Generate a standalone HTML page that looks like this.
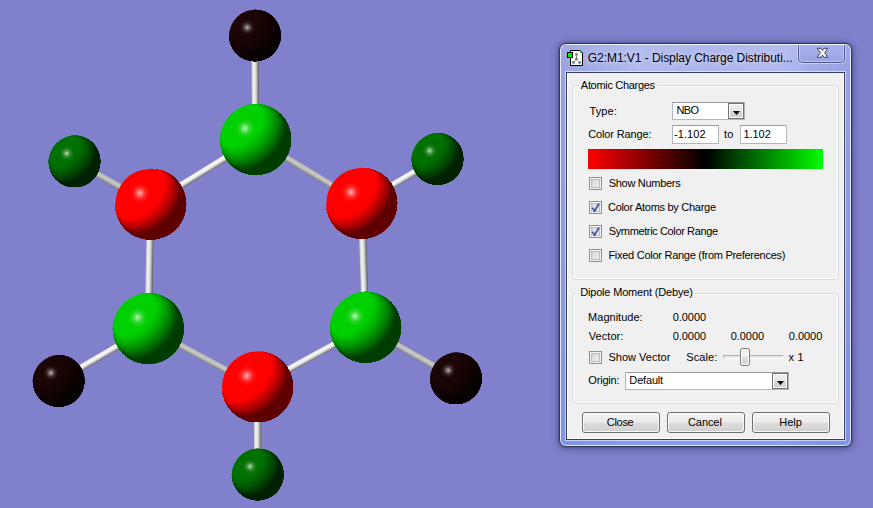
<!DOCTYPE html><html><head><meta charset="utf-8"><title>Display Charge Distribution</title><style>
html,body{margin:0;padding:0}
body{width:873px;height:508px;overflow:hidden;background:#8080cc;position:relative;font-family:"Liberation Sans",sans-serif;font-size:11px;color:#000}
.a{position:absolute;white-space:nowrap}
.t{position:absolute;white-space:nowrap;line-height:13px}
#dlg{position:absolute;left:559px;top:43px;width:293px;height:404px;border-radius:7px;box-sizing:border-box;border:1px solid #2e3558;
 background:linear-gradient(180deg,rgba(255,255,255,.10) 0px,rgba(255,255,255,.04) 28px,rgba(255,255,255,0) 60px,rgba(105,138,232,.55) 100%),linear-gradient(90deg,#959fe0 0%,#9da7e4 8%,#adb6ec 26%,#a9b2ea 50%,#aeb7ee 78%,#9ca6e4 88%,#949ee0 100%);
 box-shadow:inset 0 0 0 1px rgba(255,255,255,.78),0 0 2px 0 rgba(30,30,70,.55),0 1px 7px 1px rgba(30,30,80,.46)}
#client{position:absolute;left:567px;top:73px;width:277px;height:366px;background:#f0f0f0;box-shadow:inset 1px 0 0 #fff,inset -1px 0 0 #fff,inset 0 -1px 0 #fff,0 0 0 1px #39405f,0 0 0 2px rgba(255,255,255,.55)}
.gb{position:absolute;border:1px solid #d3dde4;border-radius:3.500px;box-shadow:inset 0 0 0 1px #fdfdfd;box-sizing:border-box}
.gbl{position:absolute;background:#f0f0f0;height:13px}
.in{position:absolute;box-sizing:border-box;border:1px solid #b4b6bd;border-top-color:#9a9ca3;background:#fff}
.cb{position:absolute;width:13px;height:13px;box-sizing:border-box;border:1px solid #8e8f8f;background:linear-gradient(135deg,#c4c8cc 0%,#e2e4e6 50%,#f6f6f6 100%);box-shadow:inset 0 0 0 1px #f4f4f4, inset 0 0 0 2px #b8bcc0}
.btn{position:absolute;height:21px;box-sizing:border-box;border:1px solid #707070;border-radius:3px;background:linear-gradient(#f3f3f3 0%,#ebebeb 48%,#dddddd 52%,#cfcfcf 100%);box-shadow:inset 0 0 0 1px rgba(255,255,255,.85)}
.dd{position:absolute;width:16px;height:16px;box-sizing:border-box;border:1px solid #707070;background:linear-gradient(#eeeeee 0%,#e8e8e8 48%,#d6d6d6 52%,#cccccc 100%);box-shadow:inset 0 0 0 1px #fff}
.dd:after{content:"";position:absolute;left:4px;top:7px;width:7px;height:4px;background:#000;clip-path:polygon(0 0,100% 0,50% 100%)}
</style></head><body><svg width="873" height="508" viewBox="0 0 873 508" style="position:absolute;left:0;top:0">
<defs><clipPath id="cs"><circle r="1"/></clipPath>
<g id="sr" clip-path="url(#cs)"><circle r="1" fill="#ff0000"/><path fill="#fc0000" d="M-0.023 -1A0.533 0.832 45 1 1 -1 -0.023L-1.57 0.55L0.27 2.39L2.39 0.27L0.55 -1.57Z"/><path fill="#f60000" d="M0.014 -1A0.541 0.845 45 1 1 -1 0.014L-1.55 0.57L0.28 2.41L2.41 0.28L0.57 -1.55Z"/><path fill="#f10000" d="M0.049 -0.999A0.549 0.857 45 1 1 -0.999 0.049L-1.54 0.59L0.3 2.42L2.42 0.3L0.59 -1.54Z"/><path fill="#eb0000" d="M0.083 -0.997A0.556 0.868 45 1 1 -0.997 0.083L-1.52 0.6L0.32 2.44L2.44 0.32L0.6 -1.52Z"/><path fill="#e50000" d="M0.116 -0.993A0.564 0.879 45 1 1 -0.993 0.116L-1.5 0.62L0.34 2.46L2.46 0.34L0.62 -1.5Z"/><path fill="#df0000" d="M0.149 -0.989A0.57 0.89 45 1 1 -0.989 0.149L-1.48 0.64L0.36 2.48L2.48 0.36L0.64 -1.48Z"/><path fill="#da0000" d="M0.18 -0.984A0.577 0.9 45 1 1 -0.984 0.18L-1.46 0.66L0.38 2.5L2.5 0.38L0.66 -1.46Z"/><path fill="#d40000" d="M0.21 -0.978A0.583 0.909 45 1 1 -0.978 0.21L-1.44 0.68L0.39 2.52L2.52 0.39L0.68 -1.44Z"/><path fill="#ce0000" d="M0.24 -0.971A0.588 0.918 45 1 1 -0.971 0.24L-1.43 0.7L0.41 2.53L2.53 0.41L0.7 -1.43Z"/><path fill="#c80000" d="M0.269 -0.963A0.594 0.926 45 1 1 -0.963 0.269L-1.41 0.71L0.43 2.55L2.55 0.43L0.71 -1.41Z"/><path fill="#c30000" d="M0.297 -0.955A0.599 0.934 45 1 1 -0.955 0.297L-1.39 0.73L0.45 2.57L2.57 0.45L0.73 -1.39Z"/><path fill="#bd0000" d="M0.325 -0.946A0.603 0.941 45 1 1 -0.946 0.325L-1.37 0.75L0.47 2.59L2.59 0.47L0.75 -1.37Z"/><path fill="#b70000" d="M0.352 -0.936A0.608 0.948 45 1 1 -0.936 0.352L-1.35 0.77L0.49 2.61L2.61 0.49L0.77 -1.35Z"/><path fill="#b10000" d="M0.378 -0.926A0.612 0.955 45 1 1 -0.926 0.378L-1.33 0.79L0.5 2.63L2.63 0.5L0.79 -1.33Z"/><path fill="#ac0000" d="M0.404 -0.915A0.616 0.961 45 1 1 -0.915 0.404L-1.32 0.8L0.52 2.64L2.64 0.52L0.8 -1.32Z"/><path fill="#a60000" d="M0.429 -0.904A0.619 0.966 45 1 1 -0.904 0.429L-1.3 0.82L0.54 2.66L2.66 0.54L0.82 -1.3Z"/><path fill="#a00000" d="M0.453 -0.891A0.622 0.971 45 1 1 -0.891 0.453L-1.28 0.84L0.56 2.68L2.68 0.56L0.84 -1.28Z"/><path fill="#9a0000" d="M0.477 -0.879A0.625 0.976 45 1 1 -0.879 0.477L-1.26 0.86L0.58 2.7L2.7 0.58L0.86 -1.26Z"/><path fill="#950000" d="M0.5 -0.866A0.628 0.98 45 1 1 -0.866 0.5L-1.24 0.88L0.6 2.72L2.72 0.6L0.88 -1.24Z"/><path fill="#8f0000" d="M0.523 -0.852A0.63 0.984 45 1 1 -0.852 0.523L-1.23 0.9L0.61 2.73L2.73 0.61L0.9 -1.23Z"/><path fill="#890000" d="M0.546 -0.838A0.633 0.987 45 1 1 -0.838 0.546L-1.21 0.91L0.63 2.75L2.75 0.63L0.91 -1.21Z"/><path fill="#830000" d="M0.568 -0.823A0.635 0.99 45 1 1 -0.823 0.568L-1.19 0.93L0.65 2.77L2.77 0.65L0.93 -1.19Z"/><path fill="#7e0000" d="M0.589 -0.808A0.636 0.993 45 1 1 -0.808 0.589L-1.17 0.95L0.67 2.79L2.79 0.67L0.95 -1.17Z"/><path fill="#780000" d="M0.61 -0.793A0.638 0.995 45 1 1 -0.793 0.61L-1.15 0.97L0.69 2.81L2.81 0.69L0.97 -1.15Z"/><path fill="#720000" d="M0.63 -0.776A0.639 0.997 45 1 1 -0.776 0.63L-1.13 0.99L0.7 2.83L2.83 0.7L0.99 -1.13Z"/><path fill="#6c0000" d="M0.65 -0.76A0.64 0.998 45 1 1 -0.76 0.65L-1.12 1.01L0.72 2.84L2.84 0.72L1.01 -1.12Z"/><path fill="#670000" d="M0.67 -0.743A0.64 0.999 45 1 1 -0.743 0.67L-1.1 1.02L0.74 2.86L2.86 0.74L1.02 -1.1Z"/><path fill="#610000" d="M0.689 -0.725A0.641 1 45 1 1 -0.725 0.689L-1.08 1.04L0.76 2.88L2.88 0.76L1.04 -1.08Z"/><path fill="#5e0000" d="M0.707 -0.707A0.641 1 45 1 1 -0.707 0.707L-1.06 1.06L0.78 2.9L2.9 0.78L1.06 -1.06Z"/></g>
<g id="sg" clip-path="url(#cs)"><circle r="1" fill="#00d000"/><path fill="#00cd00" d="M-0.385 -0.923A0.451 0.704 45 1 1 -0.923 -0.385L-1.71 0.41L0.12 2.25L2.25 0.12L0.41 -1.71Z"/><path fill="#00c700" d="M-0.305 -0.952A0.468 0.731 45 1 1 -0.952 -0.305L-1.69 0.43L0.15 2.27L2.27 0.15L0.43 -1.69Z"/><path fill="#00c200" d="M-0.235 -0.972A0.484 0.755 45 1 1 -0.972 -0.235L-1.66 0.46L0.17 2.3L2.3 0.17L0.46 -1.66Z"/><path fill="#00bc00" d="M-0.172 -0.985A0.499 0.778 45 1 1 -0.985 -0.172L-1.64 0.48L0.2 2.32L2.32 0.2L0.48 -1.64Z"/><path fill="#00b600" d="M-0.113 -0.994A0.512 0.799 45 1 1 -0.994 -0.113L-1.61 0.51L0.22 2.35L2.35 0.22L0.51 -1.61Z"/><path fill="#00b100" d="M-0.058 -0.998A0.525 0.819 45 1 1 -0.998 -0.058L-1.59 0.53L0.25 2.37L2.37 0.25L0.53 -1.59Z"/><path fill="#00ab00" d="M-0.006 -1A0.537 0.838 45 1 1 -1 -0.006L-1.56 0.56L0.27 2.4L2.4 0.27L0.56 -1.56Z"/><path fill="#00a500" d="M0.043 -0.999A0.548 0.855 45 1 1 -0.999 0.043L-1.54 0.58L0.3 2.42L2.42 0.3L0.58 -1.54Z"/><path fill="#00a000" d="M0.09 -0.996A0.558 0.871 45 1 1 -0.996 0.09L-1.51 0.61L0.33 2.45L2.45 0.33L0.61 -1.51Z"/><path fill="#009a00" d="M0.136 -0.991A0.568 0.886 45 1 1 -0.991 0.136L-1.49 0.63L0.35 2.47L2.47 0.35L0.63 -1.49Z"/><path fill="#009400" d="M0.179 -0.984A0.576 0.899 45 1 1 -0.984 0.179L-1.46 0.66L0.38 2.5L2.5 0.38L0.66 -1.46Z"/><path fill="#008f00" d="M0.221 -0.975A0.585 0.912 45 1 1 -0.975 0.221L-1.44 0.68L0.4 2.52L2.52 0.4L0.68 -1.44Z"/><path fill="#008900" d="M0.261 -0.965A0.592 0.924 45 1 1 -0.965 0.261L-1.41 0.71L0.43 2.55L2.55 0.43L0.71 -1.41Z"/><path fill="#008300" d="M0.3 -0.954A0.599 0.935 45 1 1 -0.954 0.3L-1.39 0.73L0.45 2.57L2.57 0.45L0.73 -1.39Z"/><path fill="#007e00" d="M0.338 -0.941A0.605 0.945 45 1 1 -0.941 0.338L-1.36 0.76L0.48 2.6L2.6 0.48L0.76 -1.36Z"/><path fill="#007800" d="M0.374 -0.927A0.611 0.954 45 1 1 -0.927 0.374L-1.34 0.78L0.5 2.62L2.62 0.5L0.78 -1.34Z"/><path fill="#007200" d="M0.409 -0.912A0.616 0.962 45 1 1 -0.912 0.409L-1.31 0.81L0.53 2.65L2.65 0.53L0.81 -1.31Z"/><path fill="#006d00" d="M0.444 -0.896A0.621 0.969 45 1 1 -0.896 0.444L-1.29 0.83L0.55 2.67L2.67 0.55L0.83 -1.29Z"/><path fill="#006700" d="M0.477 -0.879A0.625 0.976 45 1 1 -0.879 0.477L-1.26 0.86L0.58 2.7L2.7 0.58L0.86 -1.26Z"/><path fill="#006100" d="M0.509 -0.861A0.629 0.982 45 1 1 -0.861 0.509L-1.24 0.88L0.6 2.72L2.72 0.6L0.88 -1.24Z"/><path fill="#005c00" d="M0.54 -0.842A0.632 0.986 45 1 1 -0.842 0.54L-1.21 0.91L0.63 2.75L2.75 0.63L0.91 -1.21Z"/><path fill="#005600" d="M0.57 -0.822A0.635 0.991 45 1 1 -0.822 0.57L-1.19 0.93L0.65 2.77L2.77 0.65L0.93 -1.19Z"/><path fill="#005000" d="M0.599 -0.801A0.637 0.994 45 1 1 -0.801 0.599L-1.16 0.96L0.68 2.8L2.8 0.68L0.96 -1.16Z"/><path fill="#004b00" d="M0.628 -0.779A0.639 0.997 45 1 1 -0.779 0.628L-1.14 0.99L0.7 2.82L2.82 0.7L0.99 -1.14Z"/><path fill="#004500" d="M0.655 -0.756A0.64 0.999 45 1 1 -0.756 0.655L-1.11 1.01L0.73 2.85L2.85 0.73L1.01 -1.11Z"/><path fill="#003f00" d="M0.682 -0.732A0.641 1 45 1 1 -0.732 0.682L-1.09 1.04L0.75 2.87L2.87 0.75L1.04 -1.09Z"/><path fill="#003c00" d="M0.707 -0.707A0.641 1 45 1 1 -0.707 0.707L-1.06 1.06L0.78 2.9L2.9 0.78L1.06 -1.06Z"/></g>
<g id="sd" clip-path="url(#cs)"><circle r="1" fill="#007000"/><path fill="#006e00" d="M-0.385 -0.923A0.451 0.704 45 1 1 -0.923 -0.385L-1.71 0.41L0.12 2.25L2.25 0.12L0.41 -1.71Z"/><path fill="#006a00" d="M-0.283 -0.959A0.473 0.738 45 1 1 -0.959 -0.283L-1.68 0.44L0.16 2.28L2.28 0.16L0.44 -1.68Z"/><path fill="#006600" d="M-0.197 -0.98A0.493 0.769 45 1 1 -0.98 -0.197L-1.65 0.47L0.19 2.31L2.31 0.19L0.47 -1.65Z"/><path fill="#006200" d="M-0.119 -0.993A0.511 0.797 45 1 1 -0.993 -0.119L-1.62 0.5L0.22 2.34L2.34 0.22L0.5 -1.62Z"/><path fill="#005e00" d="M-0.047 -0.999A0.527 0.823 45 1 1 -0.999 -0.047L-1.58 0.54L0.25 2.38L2.38 0.25L0.54 -1.58Z"/><path fill="#005a00" d="M0.019 -1A0.542 0.846 45 1 1 -1 0.019L-1.55 0.57L0.29 2.41L2.41 0.29L0.57 -1.55Z"/><path fill="#005600" d="M0.081 -0.997A0.556 0.868 45 1 1 -0.997 0.081L-1.52 0.6L0.32 2.44L2.44 0.32L0.6 -1.52Z"/><path fill="#005200" d="M0.14 -0.99A0.568 0.887 45 1 1 -0.99 0.14L-1.49 0.64L0.35 2.47L2.47 0.35L0.64 -1.49Z"/><path fill="#004e00" d="M0.196 -0.981A0.58 0.905 45 1 1 -0.981 0.196L-1.45 0.67L0.39 2.51L2.51 0.39L0.67 -1.45Z"/><path fill="#004a00" d="M0.249 -0.968A0.59 0.921 45 1 1 -0.968 0.249L-1.42 0.7L0.42 2.54L2.54 0.42L0.7 -1.42Z"/><path fill="#004600" d="M0.3 -0.954A0.599 0.935 45 1 1 -0.954 0.3L-1.39 0.73L0.45 2.57L2.57 0.45L0.73 -1.39Z"/><path fill="#004200" d="M0.349 -0.937A0.607 0.948 45 1 1 -0.937 0.349L-1.35 0.77L0.48 2.6L2.6 0.48L0.77 -1.35Z"/><path fill="#003e00" d="M0.395 -0.919A0.614 0.959 45 1 1 -0.919 0.395L-1.32 0.8L0.52 2.64L2.64 0.52L0.8 -1.32Z"/><path fill="#003a00" d="M0.44 -0.898A0.621 0.969 45 1 1 -0.898 0.44L-1.29 0.83L0.55 2.67L2.67 0.55L0.83 -1.29Z"/><path fill="#003600" d="M0.483 -0.876A0.626 0.977 45 1 1 -0.876 0.483L-1.26 0.86L0.58 2.7L2.7 0.58L0.86 -1.26Z"/><path fill="#003200" d="M0.524 -0.851A0.631 0.984 45 1 1 -0.851 0.524L-1.22 0.9L0.61 2.74L2.74 0.61L0.9 -1.22Z"/><path fill="#002e00" d="M0.564 -0.826A0.634 0.99 45 1 1 -0.826 0.564L-1.19 0.93L0.65 2.77L2.77 0.65L0.93 -1.19Z"/><path fill="#002a00" d="M0.602 -0.798A0.637 0.994 45 1 1 -0.798 0.602L-1.16 0.96L0.68 2.8L2.8 0.68L0.96 -1.16Z"/><path fill="#002600" d="M0.639 -0.769A0.639 0.997 45 1 1 -0.769 0.639L-1.13 1L0.71 2.83L2.83 0.71L1 -1.13Z"/><path fill="#002200" d="M0.674 -0.739A0.64 0.999 45 1 1 -0.739 0.674L-1.09 1.03L0.75 2.87L2.87 0.75L1.03 -1.09Z"/><path fill="#002000" d="M0.707 -0.707A0.641 1 45 1 1 -0.707 0.707L-1.06 1.06L0.78 2.9L2.9 0.78L1.06 -1.06Z"/></g>
<g id="sk" clip-path="url(#cs)"><circle r="1" fill="#1b0505"/><path fill="#1a0505" d="M-0.385 -0.923A0.451 0.704 45 1 1 -0.923 -0.385L-1.71 0.41L0.12 2.25L2.25 0.12L0.41 -1.71Z"/><path fill="#180404" d="M-0.197 -0.98A0.493 0.769 45 1 1 -0.98 -0.197L-1.65 0.47L0.19 2.31L2.31 0.19L0.47 -1.65Z"/><path fill="#160404" d="M-0.047 -0.999A0.527 0.823 45 1 1 -0.999 -0.047L-1.58 0.54L0.25 2.38L2.38 0.25L0.54 -1.58Z"/><path fill="#140404" d="M0.081 -0.997A0.556 0.868 45 1 1 -0.997 0.081L-1.52 0.6L0.32 2.44L2.44 0.32L0.6 -1.52Z"/><path fill="#120303" d="M0.196 -0.981A0.58 0.905 45 1 1 -0.981 0.196L-1.45 0.67L0.39 2.51L2.51 0.39L0.67 -1.45Z"/><path fill="#100303" d="M0.3 -0.954A0.599 0.935 45 1 1 -0.954 0.3L-1.39 0.73L0.45 2.57L2.57 0.45L0.73 -1.39Z"/><path fill="#0f0303" d="M0.395 -0.919A0.614 0.959 45 1 1 -0.919 0.395L-1.32 0.8L0.52 2.64L2.64 0.52L0.8 -1.32Z"/><path fill="#0d0202" d="M0.483 -0.876A0.626 0.977 45 1 1 -0.876 0.483L-1.26 0.86L0.58 2.7L2.7 0.58L0.86 -1.26Z"/><path fill="#0b0202" d="M0.564 -0.826A0.634 0.99 45 1 1 -0.826 0.564L-1.19 0.93L0.65 2.77L2.77 0.65L0.93 -1.19Z"/><path fill="#090202" d="M0.639 -0.769A0.639 0.997 45 1 1 -0.769 0.639L-1.13 1L0.71 2.83L2.83 0.71L1 -1.13Z"/><path fill="#080101" d="M0.707 -0.707A0.641 1 45 1 1 -0.707 0.707L-1.06 1.06L0.78 2.9L2.9 0.78L1.06 -1.06Z"/></g>
<radialGradient id="hl"><stop offset="0" stop-color="#fff" stop-opacity="0.7"/><stop offset="0.18" stop-color="#fff" stop-opacity="0.52"/><stop offset="0.4" stop-color="#fff" stop-opacity="0.26"/><stop offset="0.65" stop-color="#fff" stop-opacity="0.09"/><stop offset="1" stop-color="#fff" stop-opacity="0"/></radialGradient>
<linearGradient id="b1" gradientUnits="userSpaceOnUse" x1="201.37" y1="168.94" x2="204.83" y2="174.56"><stop offset="0" stop-color="#ccccd4"/><stop offset="0.15" stop-color="#f6f6f6"/><stop offset="0.45" stop-color="#f2f2f2"/><stop offset="0.62" stop-color="#dcdcdc"/><stop offset="0.8" stop-color="#a4a4a4"/><stop offset="1" stop-color="#6a6a6a"/></linearGradient><linearGradient id="b2" gradientUnits="userSpaceOnUse" x1="310.27" y1="168.56" x2="306.98" y2="174.04"><stop offset="0" stop-color="#a8a8a8"/><stop offset="0.2" stop-color="#c0c0c0"/><stop offset="0.4" stop-color="#c8c8c8"/><stop offset="0.6" stop-color="#c0c0c0"/><stop offset="0.8" stop-color="#a0a0a0"/><stop offset="1" stop-color="#808080"/></linearGradient><linearGradient id="b3" gradientUnits="userSpaceOnUse" x1="145.83" y1="266.18" x2="153.02" y2="266.32"><stop offset="0" stop-color="#c0c0c8"/><stop offset="0.2" stop-color="#e8e8e8"/><stop offset="0.38" stop-color="#f0f0f0"/><stop offset="0.55" stop-color="#dcdcdc"/><stop offset="0.7" stop-color="#bcbcbc"/><stop offset="0.85" stop-color="#8c8c8c"/><stop offset="1" stop-color="#585858"/></linearGradient><linearGradient id="b4" gradientUnits="userSpaceOnUse" x1="360.03" y1="265.31" x2="367.22" y2="265.09"><stop offset="0" stop-color="#c0c0c8"/><stop offset="0.2" stop-color="#e8e8e8"/><stop offset="0.38" stop-color="#f0f0f0"/><stop offset="0.55" stop-color="#dcdcdc"/><stop offset="0.7" stop-color="#bcbcbc"/><stop offset="0.85" stop-color="#8c8c8c"/><stop offset="1" stop-color="#585858"/></linearGradient><linearGradient id="b5" gradientUnits="userSpaceOnUse" x1="204.36" y1="354.70" x2="201.34" y2="360.35"><stop offset="0" stop-color="#a8a8a8"/><stop offset="0.2" stop-color="#c0c0c0"/><stop offset="0.4" stop-color="#c8c8c8"/><stop offset="0.6" stop-color="#c0c0c0"/><stop offset="0.8" stop-color="#a0a0a0"/><stop offset="1" stop-color="#808080"/></linearGradient><linearGradient id="b6" gradientUnits="userSpaceOnUse" x1="309.94" y1="354.03" x2="313.11" y2="359.82"><stop offset="0" stop-color="#ccccd4"/><stop offset="0.15" stop-color="#f6f6f6"/><stop offset="0.45" stop-color="#f2f2f2"/><stop offset="0.62" stop-color="#dcdcdc"/><stop offset="0.8" stop-color="#a4a4a4"/><stop offset="1" stop-color="#6a6a6a"/></linearGradient><linearGradient id="b7" gradientUnits="userSpaceOnUse" x1="251.65" y1="87.45" x2="258.85" y2="87.40"><stop offset="0" stop-color="#c0c0c8"/><stop offset="0.2" stop-color="#e8e8e8"/><stop offset="0.38" stop-color="#f0f0f0"/><stop offset="0.55" stop-color="#dcdcdc"/><stop offset="0.7" stop-color="#bcbcbc"/><stop offset="0.85" stop-color="#8c8c8c"/><stop offset="1" stop-color="#585858"/></linearGradient><linearGradient id="b8" gradientUnits="userSpaceOnUse" x1="114.09" y1="179.91" x2="110.96" y2="185.49"><stop offset="0" stop-color="#a8a8a8"/><stop offset="0.2" stop-color="#c0c0c0"/><stop offset="0.4" stop-color="#c8c8c8"/><stop offset="0.6" stop-color="#c0c0c0"/><stop offset="0.8" stop-color="#a0a0a0"/><stop offset="1" stop-color="#808080"/></linearGradient><linearGradient id="b9" gradientUnits="userSpaceOnUse" x1="397.88" y1="178.20" x2="401.22" y2="183.90"><stop offset="0" stop-color="#ccccd4"/><stop offset="0.15" stop-color="#f6f6f6"/><stop offset="0.45" stop-color="#f2f2f2"/><stop offset="0.62" stop-color="#dcdcdc"/><stop offset="0.8" stop-color="#a4a4a4"/><stop offset="1" stop-color="#6a6a6a"/></linearGradient><linearGradient id="b10" gradientUnits="userSpaceOnUse" x1="101.76" y1="351.80" x2="105.09" y2="357.50"><stop offset="0" stop-color="#ccccd4"/><stop offset="0.15" stop-color="#f6f6f6"/><stop offset="0.45" stop-color="#f2f2f2"/><stop offset="0.62" stop-color="#dcdcdc"/><stop offset="0.8" stop-color="#a4a4a4"/><stop offset="1" stop-color="#6a6a6a"/></linearGradient><linearGradient id="b11" gradientUnits="userSpaceOnUse" x1="412.33" y1="349.97" x2="409.17" y2="355.53"><stop offset="0" stop-color="#a8a8a8"/><stop offset="0.2" stop-color="#c0c0c0"/><stop offset="0.4" stop-color="#c8c8c8"/><stop offset="0.6" stop-color="#c0c0c0"/><stop offset="0.8" stop-color="#a0a0a0"/><stop offset="1" stop-color="#808080"/></linearGradient><linearGradient id="b12" gradientUnits="userSpaceOnUse" x1="253.98" y1="430.56" x2="261.17" y2="430.54"><stop offset="0" stop-color="#c0c0c8"/><stop offset="0.2" stop-color="#e8e8e8"/><stop offset="0.38" stop-color="#f0f0f0"/><stop offset="0.55" stop-color="#dcdcdc"/><stop offset="0.7" stop-color="#bcbcbc"/><stop offset="0.85" stop-color="#8c8c8c"/><stop offset="1" stop-color="#585858"/></linearGradient></defs>
<line x1="255.6" y1="139.4" x2="150.6" y2="204.1" stroke="url(#b1)" stroke-width="6.6"/>
<line x1="255.6" y1="139.4" x2="361.65" y2="203.2" stroke="url(#b2)" stroke-width="6.4"/>
<line x1="150.6" y1="204.1" x2="148.25" y2="328.4" stroke="url(#b3)" stroke-width="7.2"/>
<line x1="361.65" y1="203.2" x2="365.6" y2="327.2" stroke="url(#b4)" stroke-width="7.2"/>
<line x1="148.25" y1="328.4" x2="257.45" y2="386.65" stroke="url(#b5)" stroke-width="6.4"/>
<line x1="365.6" y1="327.2" x2="257.45" y2="386.65" stroke="url(#b6)" stroke-width="6.6"/>
<line x1="255.6" y1="139.4" x2="254.9" y2="35.45" stroke="url(#b7)" stroke-width="7.2"/>
<line x1="150.6" y1="204.1" x2="74.45" y2="161.3" stroke="url(#b8)" stroke-width="6.4"/>
<line x1="361.65" y1="203.2" x2="437.45" y2="158.9" stroke="url(#b9)" stroke-width="6.6"/>
<line x1="148.25" y1="328.4" x2="58.6" y2="380.9" stroke="url(#b10)" stroke-width="6.6"/>
<line x1="365.6" y1="327.2" x2="455.9" y2="378.3" stroke="url(#b11)" stroke-width="6.4"/>
<line x1="257.45" y1="386.65" x2="257.7" y2="474.45" stroke="url(#b12)" stroke-width="7.2"/>
<use href="#sk" transform="translate(254.9,35.45) scale(25.8)"/><circle cx="247.2" cy="27.5" r="7.5" fill="url(#hl)"/>
<use href="#sd" transform="translate(74.45,161.3) scale(25.8)"/><circle cx="66.7" cy="153.3" r="7.5" fill="url(#hl)"/>
<use href="#sd" transform="translate(437.45,158.9) scale(25.8)"/><circle cx="429.7" cy="150.9" r="7.5" fill="url(#hl)"/>
<use href="#sk" transform="translate(58.6,380.9) scale(25.8)"/><circle cx="50.9" cy="372.9" r="7.5" fill="url(#hl)"/>
<use href="#sk" transform="translate(455.9,378.3) scale(25.8)"/><circle cx="448.2" cy="370.3" r="7.5" fill="url(#hl)"/>
<use href="#sd" transform="translate(257.7,474.45) scale(25.8)"/><circle cx="250.0" cy="466.5" r="7.5" fill="url(#hl)"/>
<use href="#sg" transform="translate(255.6,139.4) scale(35.45)"/><circle cx="245.0" cy="128.4" r="10.3" fill="url(#hl)"/>
<use href="#sr" transform="translate(150.6,204.1) scale(35.45)"/><circle cx="140.0" cy="193.1" r="10.3" fill="url(#hl)"/>
<use href="#sr" transform="translate(361.65,203.2) scale(35.45)"/><circle cx="351.0" cy="192.2" r="10.3" fill="url(#hl)"/>
<use href="#sg" transform="translate(148.25,328.4) scale(35.45)"/><circle cx="137.6" cy="317.4" r="10.3" fill="url(#hl)"/>
<use href="#sg" transform="translate(365.6,327.2) scale(35.45)"/><circle cx="355.0" cy="316.2" r="10.3" fill="url(#hl)"/>
<use href="#sr" transform="translate(257.45,386.65) scale(35.45)"/><circle cx="246.8" cy="375.7" r="10.3" fill="url(#hl)"/>
</svg>
<div id="dlg"></div>
<div id="client"></div>
<div class="t" style="left:587.74px;top:51px;letter-spacing:-0.047px;font-size:12px;line-height:15px;text-shadow:0 0 5px rgba(255,255,255,.55),0 0 9px rgba(255,255,255,.4);">G2:M1:V1 - Display Charge Distributi...</div>
<div class="a" style="left:798px;top:45px;width:47px;height:18px;box-sizing:border-box;border:1px solid #50588a;border-top:0;border-radius:0 0 5px 5px;background:linear-gradient(#a9b2ec,#9aa4e2);box-shadow:inset 0 -1px 0 0 rgba(255,255,255,.35),inset 1px 0 0 0 rgba(255,255,255,.35),inset -1px 0 0 0 rgba(255,255,255,.35),0 0 0 1px rgba(255,255,255,.45)"></div>
<svg class="a" style="left:812px;top:44px" width="22" height="18" viewBox="812 44 22 18"><polygon points="817.200,48.300 821,48.300 822.500,50.500 824,48.300 827.800,48.300 824.700,52.800 827.800,57.300 824,57.300 822.500,55.100 821,57.300 817.200,57.300 820.300,52.800" fill="#f4f4f4" stroke="#40445c" stroke-width="1" stroke-linejoin="round"/></svg>
<svg class="a" style="left:567px;top:50px" width="16" height="16" viewBox="0 0 16 16"><path d="M3.500 0.500H13L15.500 3V15.500H3.500Z" fill="#fff" stroke="#000" stroke-width="1"/><rect x="0.500" y="2.500" width="5" height="5" fill="#00ee00" stroke="#000" stroke-width="1"/><rect x="13" y="2" width="1" height="1" fill="#00c800"/><g fill="#707070"><rect x="8.200" y="3.300" width="2.400" height="2.300"/><rect x="9" y="5.500" width="0.900" height="3"/><rect x="8.200" y="8.100" width="2.400" height="2.300"/><rect x="5.200" y="11.200" width="2.500" height="2.500"/><rect x="11.300" y="11.200" width="2.500" height="2.500"/></g><path d="M8.600 10.200L7 11.800M10.200 10.200L11.800 11.800" stroke="#a0a0a0" stroke-width="0.900"/></svg>
<div class="gb" style="left:572px;top:85px;width:267px;height:195px"></div>
<div class="gbl" style="left:579px;top:79px;width:78px"></div>
<div class="t" style="left:580.87px;top:79px;letter-spacing:-0.315px;">Atomic Charges</div>
<div class="gb" style="left:572px;top:293px;width:267px;height:111px"></div>
<div class="gbl" style="left:579px;top:286px;width:116px"></div>
<div class="t" style="left:580.17px;top:286px;letter-spacing:-0.173px;">Dipole Moment (Debye)</div>
<div class="t" style="left:589.41px;top:105px;letter-spacing:0.113px;">Type:</div>
<div class="in" style="left:672px;top:102px;width:73px;height:18px"></div>
<div class="t" style="left:676.59px;top:104px;letter-spacing:-0.720px;">NBO</div>
<div class="dd" style="left:728px;top:103px"></div>
<div class="t" style="left:588.17px;top:128px;letter-spacing:-0.132px;">Color Range:</div>
<div class="in" style="left:672px;top:125px;width:47px;height:19px"></div>
<div class="t" style="left:674.10px;top:128px;letter-spacing:0.060px;">-1.102</div>
<div class="t" style="left:723.90px;top:128px;letter-spacing:0.388px;">to</div>
<div class="in" style="left:740px;top:125px;width:47px;height:19px"></div>
<div class="t" style="left:743.42px;top:128px;letter-spacing:-0.041px;">1.102</div>
<div class="a" style="left:588px;top:149px;width:235px;height:20px;background:linear-gradient(90deg,#ff0000 0%,#000000 50%,#00ff00 100%)"></div>
<div class="cb" style="left:589px;top:177px"></div>
<div class="t" style="left:608.76px;top:177px;letter-spacing:-0.298px;">Show Numbers</div>
<div class="cb" style="left:589px;top:201px"><svg width="13" height="13" viewBox="0 0 13 13" style="position:absolute;left:-1px;top:-1px"><path d="M3.300 6.700 L5.700 10 L9.900 2.700" fill="none" stroke="#4157a6" stroke-width="1.800"/></svg></div>
<div class="t" style="left:607.97px;top:201px;letter-spacing:-0.284px;">Color Atoms by Charge</div>
<div class="cb" style="left:589px;top:225px"><svg width="13" height="13" viewBox="0 0 13 13" style="position:absolute;left:-1px;top:-1px"><path d="M3.300 6.700 L5.700 10 L9.900 2.700" fill="none" stroke="#4157a6" stroke-width="1.800"/></svg></div>
<div class="t" style="left:608.76px;top:225px;letter-spacing:-0.374px;">Symmetric Color Range</div>
<div class="cb" style="left:589px;top:249px"></div>
<div class="t" style="left:608.41px;top:249px;letter-spacing:-0.270px;">Fixed Color Range (from Preferences)</div>
<div class="t" style="left:588.09px;top:311px;letter-spacing:0.013px;">Magnitude:</div>
<div class="t" style="left:672.76px;top:311px;letter-spacing:-0.064px;">0.0000</div>
<div class="t" style="left:588.85px;top:330px;letter-spacing:0.043px;">Vector:</div>
<div class="t" style="left:672.76px;top:330px;letter-spacing:-0.064px;">0.0000</div>
<div class="t" style="left:730.76px;top:330px;letter-spacing:-0.064px;">0.0000</div>
<div class="t" style="left:788.86px;top:330px;letter-spacing:-0.045px;">0.0000</div>
<div class="cb" style="left:589px;top:351px"></div>
<div class="t" style="left:608.46px;top:351px;letter-spacing:0.011px;">Show Vector</div>
<div class="t" style="left:686.36px;top:351px;letter-spacing:0.078px;">Scale:</div>
<div class="a" style="left:723px;top:355px;width:61px;height:4px;box-sizing:border-box;border-top:1px solid #b2b2b2;border-left:1px solid #b2b2b2;border-bottom:1px solid #fcfcfc;border-right:1px solid #fcfcfc;background:#e7eaea"></div>
<div class="a" style="left:740px;top:348px;width:10px;height:18px;box-sizing:border-box;border:1px solid #7c7c7c;border-radius:2.500px;background:linear-gradient(#f4f4f4 0%,#eeeeee 48%,#dcdcdc 52%,#d2d2d2 100%);box-shadow:inset 0 0 0 1px #fff,0 0 1px rgba(0,0,0,.25)"></div>
<div class="t" style="left:788.57px;top:351px;letter-spacing:0.202px;">x 1</div>
<div class="t" style="left:588.32px;top:374px;letter-spacing:-0.185px;">Origin:</div>
<div class="in" style="left:625px;top:372px;width:164px;height:18px"></div>
<div class="t" style="left:629.37px;top:374px;letter-spacing:-0.176px;">Default</div>
<div class="dd" style="left:772px;top:373px"></div>
<div class="btn" style="left:582px;top:412px;width:78px"></div>
<div class="t" style="left:606.87px;top:416px;letter-spacing:-0.326px;">Close</div>
<div class="btn" style="left:667px;top:412px;width:78px"></div>
<div class="t" style="left:687.97px;top:416px;letter-spacing:-0.070px;">Cancel</div>
<div class="btn" style="left:752px;top:412px;width:78px"></div>
<div class="t" style="left:779.31px;top:416px;letter-spacing:-0.048px;">Help</div></body></html>
